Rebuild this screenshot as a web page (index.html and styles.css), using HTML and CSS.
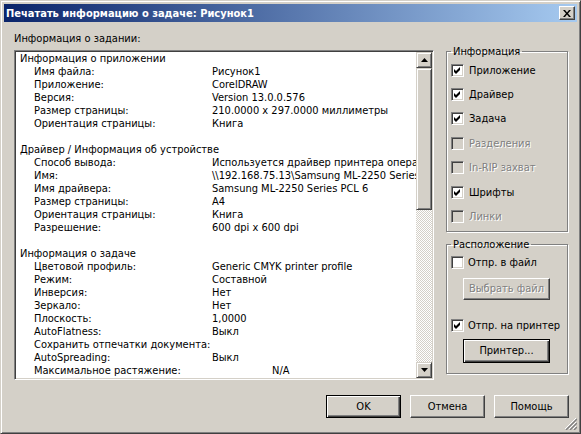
FILE: index.html
```html
<!DOCTYPE html>
<html lang="ru">
<head>
<meta charset="utf-8">
<title>Печатать информацию о задаче</title>
<link rel="stylesheet" href="styles.css">
</head>
<body>
<div class="window">
  <div class="titlebar">
    <span class="title">Печатать информацию о задаче: Рисунок1</span>
    <span class="close"><svg width="8" height="7" viewBox="0 0 8 7"><path d="M0 0h2l2 2.5L6 0h2L5 3.5 8 7H6L4 4.5 2 7H0l3-3.5z" fill="#000"/></svg></span>
  </div>
  <div class="main">
    <div class="leftcol">
      <div class="label">Информация о задании:</div>
      <div class="listbox">
        <div class="listcontent">
          <div class="hdr">Информация о приложении</div>
          <div class="item"><span class="k">Имя файла:</span><span class="v">Рисунок1</span></div>
          <div class="item"><span class="k">Приложение:</span><span class="v">CorelDRAW</span></div>
          <div class="item"><span class="k">Версия:</span><span class="v">Version 13.0.0.576</span></div>
          <div class="item"><span class="k">Размер страницы:</span><span class="v">210.0000 x 297.0000 миллиметры</span></div>
          <div class="item"><span class="k">Ориентация страницы:</span><span class="v">Книга</span></div>
          <div class="blank"></div>
          <div class="hdr">Драйвер / Информация об устройстве</div>
          <div class="item"><span class="k">Способ вывода:</span><span class="v">Используется драйвер принтера операционной системы</span></div>
          <div class="item"><span class="k">Имя:</span><span class="v">\\192.168.75.13\Samsung ML-2250 Series PCL 6</span></div>
          <div class="item"><span class="k">Имя драйвера:</span><span class="v">Samsung ML-2250 Series PCL 6</span></div>
          <div class="item"><span class="k">Размер страницы:</span><span class="v">A4</span></div>
          <div class="item"><span class="k">Ориентация страницы:</span><span class="v">Книга</span></div>
          <div class="item"><span class="k">Разрешение:</span><span class="v">600 dpi x 600 dpi</span></div>
          <div class="blank"></div>
          <div class="hdr">Информация о задаче</div>
          <div class="item"><span class="k">Цветовой профиль:</span><span class="v">Generic CMYK printer profile</span></div>
          <div class="item"><span class="k">Режим:</span><span class="v">Составной</span></div>
          <div class="item"><span class="k">Инверсия:</span><span class="v">Нет</span></div>
          <div class="item"><span class="k">Зеркало:</span><span class="v">Нет</span></div>
          <div class="item"><span class="k">Плоскость:</span><span class="v">1,0000</span></div>
          <div class="item"><span class="k">AutoFlatness:</span><span class="v">Выкл</span></div>
          <div class="item"><span class="k">Сохранить отпечатки документа:</span><span class="v"></span></div>
          <div class="item"><span class="k">AutoSpreading:</span><span class="v">Выкл</span></div>
          <div class="item"><span class="k">Максимальное растяжение:</span><span class="v na">N/A</span></div>
        </div>
        <div class="scrollbar">
          <div class="sbtn"><svg width="7" height="4" viewBox="0 0 7 4"><path d="M3.5 0L7 4H0z" fill="#000"/></svg></div>
          <div class="track"><div class="thumb"></div></div>
          <div class="sbtn"><svg width="7" height="4" viewBox="0 0 7 4"><path d="M0 0h7L3.5 4z" fill="#000"/></svg></div>
        </div>
      </div>
    </div>
    <div class="rightcol">
      <fieldset class="group g1">
        <legend>Информация</legend>
        <div class="cb"><span class="box"><svg class="tick" width="7" height="7" viewBox="0 0 7 7"><path d="M0 2l2 2 4-4v3L2 7 0 5z" fill="#000"/></svg></span><span>Приложение</span></div>
        <div class="cb"><span class="box"><svg class="tick" width="7" height="7" viewBox="0 0 7 7"><path d="M0 2l2 2 4-4v3L2 7 0 5z" fill="#000"/></svg></span><span>Драйвер</span></div>
        <div class="cb"><span class="box"><svg class="tick" width="7" height="7" viewBox="0 0 7 7"><path d="M0 2l2 2 4-4v3L2 7 0 5z" fill="#000"/></svg></span><span>Задача</span></div>
        <div class="cb disabled"><span class="box"></span><span>Разделения</span></div>
        <div class="cb disabled"><span class="box"></span><span>In-RIP захват</span></div>
        <div class="cb"><span class="box"><svg class="tick" width="7" height="7" viewBox="0 0 7 7"><path d="M0 2l2 2 4-4v3L2 7 0 5z" fill="#000"/></svg></span><span>Шрифты</span></div>
        <div class="cb disabled"><span class="box"></span><span>Линки</span></div>
      </fieldset>
      <fieldset class="group g2">
        <legend>Расположение</legend>
        <div class="cb cb2"><span class="box"></span><span>Отпр. в файл</span></div>
        <div class="btn gbtn disabledbtn">Выбрать файл</div>
        <div class="cb cb2 cb3"><span class="box"><svg class="tick" width="7" height="7" viewBox="0 0 7 7"><path d="M0 2l2 2 4-4v3L2 7 0 5z" fill="#000"/></svg></span><span>Отпр. на принтер</span></div>
        <div class="btn gbtn default">Принтер...</div>
      </fieldset>
    </div>
  </div>
  <div class="buttons">
    <div class="btn dbtn default">OK</div>
    <div class="btn dbtn">Отмена</div>
    <div class="btn dbtn">Помощь</div>
  </div>
  <svg class="grip" width="12" height="12" viewBox="0 0 12 12">
    <path d="M11 0L0 11M11 4L4 11M11 8L8 11" stroke="#fff" stroke-width="1"/>
    <path d="M12 1L1 12M12 5L5 12M12 9L9 12" stroke="#808080" stroke-width="1.4"/>
  </svg>
</div>
</body>
</html>
```
FILE: styles.css
```css
html, body {
  margin: 0;
  padding: 0;
}
body {
  width: 581px;
  height: 434px;
  overflow: hidden;
  background: #d4d0c8;
  font: 11px "DejaVu Sans Condensed", "DejaVu Sans", sans-serif;
  color: #000;
}
.window {
  position: relative;
  box-sizing: border-box;
  width: 581px;
  height: 434px;
  background: #d4d0c8;
  border: 1px solid;
  border-color: #d4d0c8 #404040 #404040 #d4d0c8;
  box-shadow: inset 1px 1px #fff, inset -1px -1px #808080;
  padding: 3px;
}
.titlebar {
  height: 18px;
  display: flex;
  align-items: center;
  justify-content: space-between;
  background: linear-gradient(to right, #0a246a, #a6caf0);
  padding: 0 2px 0 2px;
}
.title {
  color: #fff;
  font-weight: bold;
  font-size: 11px;
  white-space: nowrap;
}
.close {
  width: 16px;
  height: 14px;
  box-sizing: border-box;
  display: flex;
  align-items: center;
  justify-content: center;
  background: #d4d0c8;
  border: 1px solid;
  border-color: #fff #404040 #404040 #fff;
  box-shadow: inset -1px -1px #808080;
}
.main {
  display: flex;
  align-items: flex-start;
  padding: 10px 0 0 10px;
  gap: 12px;
}
.leftcol {
  width: 420px;
}
.label {
  height: 13px;
  line-height: 13px;
  margin-bottom: 5px;
  white-space: nowrap;
}
.listbox {
  box-sizing: border-box;
  width: 420px;
  height: 330px;
  display: flex;
  background: #fff;
  border: 1px solid;
  border-color: #808080 #fff #fff #808080;
  box-shadow: inset 1px 1px #404040, inset -1px -1px #d4d0c8;
  padding: 1px;
}
.listcontent {
  flex: 1;
  overflow: hidden;
  white-space: nowrap;
}
.hdr, .item, .blank {
  height: 13px;
  line-height: 13px;
}
.hdr {
  padding-left: 4px;
}
.item {
  display: flex;
}
.k {
  flex: none;
  margin-left: 18px;
  width: 178px;
}
.v {
  flex: none;
}
.v.na {
  padding-left: 60px;
}
.scrollbar {
  width: 16px;
  flex: none;
  display: flex;
  flex-direction: column;
}
.sbtn {
  box-sizing: border-box;
  height: 16px;
  flex: none;
  display: flex;
  align-items: center;
  justify-content: center;
  background: #d4d0c8;
  border: 1px solid;
  border-color: #d4d0c8 #404040 #404040 #d4d0c8;
  box-shadow: inset 1px 1px #fff, inset -1px -1px #808080;
}
.track {
  flex: 1;
  background: repeating-conic-gradient(#fff 0 25%, #d4d0c8 0 50%) 0 0 / 2px 2px;
}
.thumb {
  box-sizing: border-box;
  height: 142px;
  background: #d4d0c8;
  border: 1px solid;
  border-color: #d4d0c8 #404040 #404040 #d4d0c8;
  box-shadow: inset 1px 1px #fff, inset -1px -1px #808080;
}
.rightcol {
  width: 122px;
  margin-top: 13px;
}
.group {
  margin: 0;
  padding: 0 4px 2px 4px;
  border: 1px solid #808080;
  box-shadow: 1px 1px #fff, inset 1px 1px #fff;
  min-width: 0;
}
.group legend {
  padding: 0 2px;
  line-height: 13px;
  height: 13px;
}
.g2 {
  margin-top: 6px;
  padding-bottom: 10px;
}
.cb {
  height: 24.4px;
  display: flex;
  align-items: center;
  white-space: nowrap;
}
.cb2 {
  height: 24px;
}
.cb3 {
  margin-top: 14px;
}
.box {
  box-sizing: border-box;
  width: 13px;
  height: 13px;
  flex: none;
  margin-right: 5px;
  background: #fff;
  border: 1px solid;
  border-color: #808080 #fff #fff #808080;
  box-shadow: inset 1px 1px #404040, inset -1px -1px #d4d0c8;
  display: flex;
  align-items: center;
  justify-content: center;
}
.cb2 .box {
  margin-right: 4px;
}
.cb.disabled {
  color: #808080;
  text-shadow: 1px 1px #fff;
}
.cb.disabled .box {
  background: #d4d0c8;
}
.btn {
  box-sizing: border-box;
  display: flex;
  align-items: center;
  justify-content: center;
  background: #d4d0c8;
  border: 1px solid;
  border-color: #fff #404040 #404040 #fff;
  box-shadow: inset -1px -1px #808080;
  white-space: nowrap;
}
.btn.default {
  border: 1px solid #000;
  box-shadow: inset 1px 1px #fff, inset -1px -1px #404040, inset -2px -2px #808080;
}
.gbtn {
  width: 87px;
  height: 22px;
  margin-left: 12px;
}
.gbtn.default {
  height: 24px;
  margin-top: 1px;
}
.disabledbtn {
  margin-top: 3px;
  color: #808080;
  text-shadow: 1px 1px #fff;
}
.buttons {
  display: flex;
  justify-content: flex-end;
  gap: 9px;
  margin-top: 15px;
  padding-right: 8px;
}
.dbtn {
  width: 75px;
  height: 23px;
}
.grip {
  position: absolute;
  right: 3px;
  bottom: 3px;
}
```
